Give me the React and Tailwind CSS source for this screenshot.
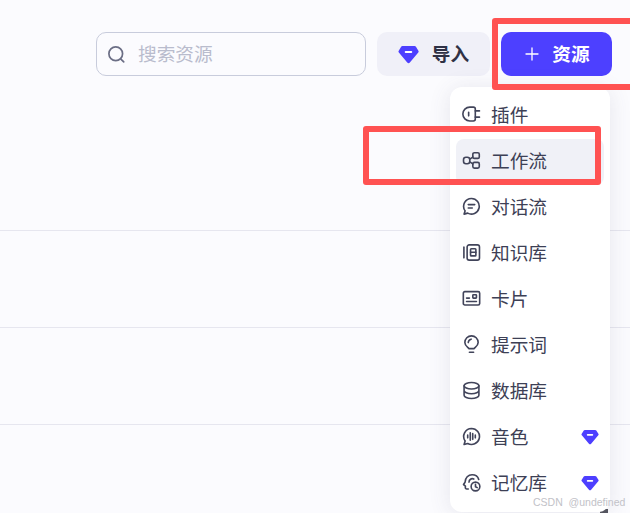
const stroke = { fill: "none", stroke: "#41445a", strokeWidth: 1.7, strokeLinecap: "round", strokeLinejoin: "round" };

function Gem({ className, fill = "#4d3fff" }) {
  return (
    <svg viewBox="0 0 20 18" className={className}>
      <path d="M4.2 1h11.6a1.6 1.6 0 0 1 1.3.7l2.3 3.7a1.4 1.4 0 0 1-.1 1.7l-8 9.4a1.6 1.6 0 0 1-2.5 0l-8-9.4a1.4 1.4 0 0 1-.1-1.7l2.3-3.7A1.6 1.6 0 0 1 4.2 1Z" fill={fill} />
      <rect x="6.4" y="5.6" width="7.2" height="1.9" rx="0.95" fill="#fff" />
    </svg>
  );
}

const icons = {
  plug: (
    <>
      <path d="M12 2.2H8.2a7.3 7.3 0 0 0 0 14.6H12a2 2 0 0 0 2-2V4.2a2 2 0 0 0-2-2Z" />
      <path d="M14 6.2h4.4M14 12.8h4.4M7 7.6v3.8" />
    </>
  ),
  flow: (
    <>
      <rect x="1.6" y="6.6" width="6.6" height="6.8" rx="2.6" />
      <rect x="11.4" y="1.8" width="6.8" height="6" rx="1.6" />
      <rect x="11.4" y="12" width="6.8" height="6" rx="1.6" />
      <path d="M8.2 8.6 11.4 6.4M8.2 11.4l3.2 2.2" />
    </>
  ),
  chat: (
    <>
      <path d="M10 1.6a8.2 8.2 0 1 1-4 15.4L2.2 18l1.1-3.4A8.2 8.2 0 0 1 10 1.6Z" />
      <path d="M6.6 8h6.8M6.6 11.6h4.2" />
    </>
  ),
  book: (
    <>
      <rect x="5.4" y="2" width="13" height="16" rx="2.2" />
      <path d="M2 4.4v11.2" />
      <rect x="9" y="6" width="5.6" height="7.6" rx="0.8" />
      <path d="M9 9.8h5.6" />
    </>
  ),
  card: (
    <>
      <rect x="1.4" y="2.8" width="17.2" height="14" rx="1.6" />
      <rect x="11.4" y="6" width="3.8" height="3.6" rx="0.6" />
      <path d="M4.8 9.6h3M4.8 13.2h10.4" />
    </>
  ),
  bulb: (
    <>
      <path d="M7.4 14.4C6 12.7 3 11.4 3 7.9a7 7 0 1 1 14 0c0 3.5-3 4.8-4.4 6.5H7.4Z" />
      <path d="M7.8 18.2h4.4M6.6 8a3.8 3.8 0 0 1 3-3.6" />
    </>
  ),
  db: (
    <>
      <ellipse cx="10" cy="5" rx="7.8" ry="3.4" />
      <path d="M2.2 5v10c0 1.9 3.5 3.4 7.8 3.4s7.8-1.5 7.8-3.4V5M2.2 10c0 1.9 3.5 3.4 7.8 3.4s7.8-1.5 7.8-3.4" />
    </>
  ),
  voice: (
    <>
      <path d="M10 1.6a8.4 8.4 0 1 1-4 15.8L2.2 18.4l1.1-3.6A8.4 8.4 0 0 1 10 1.6Z" />
      <path d="M6 8.6v2.8M8.7 6v8M11.3 7v6M14 8.6v2.8" />
    </>
  ),
  memory: (
    <>
      <path d="M6.6 16.8H5a1.5 1.5 0 0 1-1.5-1.7l.1-1.4-2-1.6 1.6-2.4C3.4 5 6.6 1.8 10.6 1.8c3.5 0 6.2 2 7 5" />
      <path d="M7.4 9.6a3.4 3.4 0 0 1 5-3.2" />
      <circle cx="14.2" cy="14.2" r="4.6" />
      <path d="M14.2 11.8v2.6l1.8 1" />
    </>
  ),
};

function Icon({ name }) {
  return (
    <svg viewBox="0 0 20 20" className="mb-[4px] h-[19px] w-[19px] shrink-0" {...stroke}>
      {icons[name]}
    </svg>
  );
}

const items = [
  ["plug", "插件"],
  ["flow", "工作流", true],
  ["chat", "对话流"],
  ["book", "知识库"],
  ["card", "卡片"],
  ["bulb", "提示词"],
  ["db", "数据库"],
  ["voice", "音色", false, true],
  ["memory", "记忆库", false, true],
];

export default function App() {
  return (
    <div
      className="relative h-[513px] w-[630px] overflow-hidden bg-[#fbfbfe]"
      style={{ fontFamily: '"Inter", "Noto Sans CJK SC", sans-serif' }}
    >
      <div className="flex items-center justify-end gap-[11px] pr-[18px] pt-[32px]">
        <div className="flex h-[44px] w-[270px] items-center gap-[12px] rounded-[10px] border border-[#c8ccdc] pl-[10px]">
          <svg viewBox="0 0 20 20" className="h-[19px] w-[19px]" fill="none" stroke="#6b6e85" strokeWidth="1.8" strokeLinecap="round">
            <circle cx="9.2" cy="9.2" r="7.2" />
            <path d="m14.6 14.8 3 3" />
          </svg>
          <span className="pt-[2px] text-[18.7px] text-[#b9bccd]">搜索资源</span>
        </div>
        <div className="flex h-[44px] w-[113px] items-center justify-center gap-[13px] rounded-[10px] bg-[#f0f0f8]">
          <Gem className="h-[19px] w-[21px]" />
          <span className="pt-[2px] text-[18.7px] font-semibold text-[#2f3145]">导入</span>
        </div>
        <div className="flex h-[44px] w-[111px] items-center justify-center gap-[13px] rounded-[10px] bg-[#4d40ff] pl-[2px]">
          <svg viewBox="0 0 14 14" className="h-[14px] w-[14px]" fill="none" stroke="#fff" strokeWidth="1.3" strokeLinecap="round">
            <path d="M7 1v12M1 7h12" />
          </svg>
          <span className="pt-[2px] text-[18.7px] font-semibold text-white">资源</span>
        </div>
      </div>

      <div className="mt-[154px]">
        <div className="h-[97px] border-t border-[#e6e6ef]" />
        <div className="h-[97px] border-t border-[#e6e6ef]" />
        <div className="h-[89px] border-t border-[#e6e6ef]" />
      </div>

      <div className="absolute left-[600px] top-[509px] h-[4px] w-[8px] bg-[#55565f]" />

      <div className="absolute left-[450px] top-[87px] w-[160px] rounded-[12px] bg-white px-[6px] pt-[6px] pb-[5px] shadow-[0_2px_22px_rgba(70,70,110,0.12)]">
        {items.map(([icon, label, active, gem]) => (
          <div
            key={label}
            className={`flex h-[46px] items-center gap-[10px] rounded-[8px] pl-[6px] pr-[5px] ${active ? "bg-[#f0f1f7]" : ""}`}
          >
            <Icon name={icon} />
            <span className="flex-1 text-[18.7px] leading-none text-[#3d4055]">{label}</span>
            {gem && <Gem className="mb-[2px] h-[16px] w-[18px]" />}
          </div>
        ))}
      </div>

      <div className="absolute left-[492px] top-[18px] h-[72px] w-[150px] rounded-[3px] border-[6px] border-[#ff5252]" />
      <div className="absolute left-[363px] top-[126px] h-[59px] w-[238px] rounded-[3px] border-[6px] border-[#ff5252]" />

      <div className="absolute left-[533px] top-[495px] whitespace-pre text-[10.5px] leading-[14px] text-[#c2c2c8]" style={{ fontFamily: '"Liberation Sans", sans-serif' }}>
        CSDN  @undefined
      </div>
    </div>
  );
}
